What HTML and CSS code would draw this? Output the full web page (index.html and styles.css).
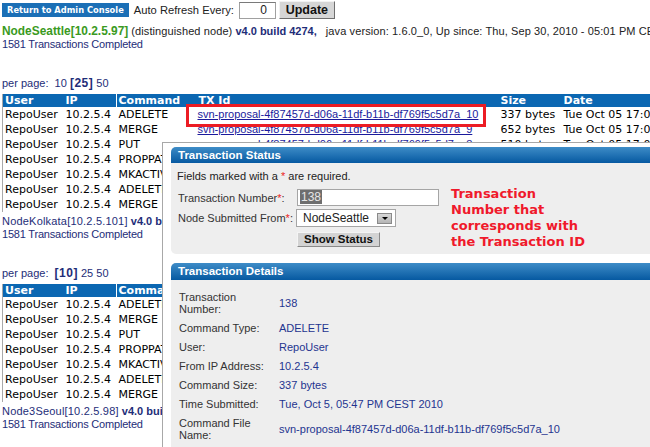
FILE: index.html
```html
<!DOCTYPE html>
<html>
<head>
<meta charset="utf-8">
<title>Transactions</title>
<link rel="stylesheet" href="styles.css">
</head>
<body>
<div class="toolbar">
  <button class="btn-admin">Return to Admin Console</button>
  <span class="refresh-label">Auto Refresh Every:</span>
  <span class="refresh-input">0</span>
  <button class="btn-update">Update</button>
</div>

<section class="node first">
  <div class="node-line"><span class="node-name dist">NodeSeattle[10.2.5.97]</span> <span class="plain">(distinguished node)</span> <b class="ver">v4.0 build 4274,</b> <span class="plain java">java version: 1.6.0_0, Up since: Thu, Sep 30, 2010 - 05:01 PM CEST</span></div>
  <div class="count">1581 Transactions Completed</div>
  <div class="pager">per page:&nbsp; <a>10</a> <b>[25]</b> <a>50</a></div>
  <table class="tx">
    <colgroup><col class="c1"><col class="c2"><col class="c3"><col class="c4"><col class="c5"><col class="c6"></colgroup>
    <thead><tr><th>User</th><th>IP</th><th>Command</th><th>TX Id</th><th>Size</th><th>Date</th></tr></thead>
    <tbody>
      <tr><td>RepoUser</td><td>10.2.5.4</td><td>ADELETE</td><td><a class="txlink">svn-proposal-4f87457d-d06a-11df-b11b-df769f5c5d7a_10</a></td><td>337 bytes</td><td>Tue Oct 05 17:07:23 CEST 2010</td></tr>
      <tr><td>RepoUser</td><td>10.2.5.4</td><td>MERGE</td><td><a class="txlink">svn-proposal-4f87457d-d06a-11df-b11b-df769f5c5d7a_9</a></td><td>652 bytes</td><td>Tue Oct 05 17:07:22 CEST 2010</td></tr>
      <tr><td>RepoUser</td><td>10.2.5.4</td><td>PUT</td><td><a class="txlink">svn-proposal-4f87457d-d06a-11df-b11b-df769f5c5d7a_8</a></td><td>510 bytes</td><td>Tue Oct 05 17:07:21 CEST 2010</td></tr>
      <tr><td>RepoUser</td><td>10.2.5.4</td><td>PROPPATCH</td><td><a class="txlink">svn-proposal-4f87457d-d06a-11df-b11b-df769f5c5d7a_7</a></td><td>420 bytes</td><td>Tue Oct 05 17:07:21 CEST 2010</td></tr>
      <tr><td>RepoUser</td><td>10.2.5.4</td><td>MKACTIVITY</td><td><a class="txlink">svn-proposal-4f87457d-d06a-11df-b11b-df769f5c5d7a_6</a></td><td>298 bytes</td><td>Tue Oct 05 17:07:20 CEST 2010</td></tr>
      <tr><td>RepoUser</td><td>10.2.5.4</td><td>ADELETE</td><td><a class="txlink">svn-proposal-4f87457d-d06a-11df-b11b-df769f5c5d7a_5</a></td><td>337 bytes</td><td>Tue Oct 05 17:06:58 CEST 2010</td></tr>
      <tr><td>RepoUser</td><td>10.2.5.4</td><td>MERGE</td><td><a class="txlink">svn-proposal-4f87457d-d06a-11df-b11b-df769f5c5d7a_4</a></td><td>652 bytes</td><td>Tue Oct 05 17:06:57 CEST 2010</td></tr>
    </tbody>
  </table>
</section>

<section class="node">
  <div class="node-line"><span class="node-name">NodeKolkata[10.2.5.101]</span> <b class="ver">v4.0 build 4274,</b> <span class="plain java">java version: 1.6.0_0, Up since: Thu, Sep 30, 2010 - 05:03 PM CEST</span></div>
  <div class="count">1581 Transactions Completed</div>
  <div class="pager">per page:&nbsp; <b>[10]</b> <a>25</a> <a>50</a></div>
  <table class="tx">
    <colgroup><col class="c1"><col class="c2"><col class="c3"><col class="c4"><col class="c5"><col class="c6"></colgroup>
    <thead><tr><th>User</th><th>IP</th><th>Command</th><th>TX Id</th><th>Size</th><th>Date</th></tr></thead>
    <tbody>
      <tr><td>RepoUser</td><td>10.2.5.4</td><td>ADELETE</td><td><a class="txlink">svn-proposal-4f87457d-d06a-11df-b11b-df769f5c5d7a_10</a></td><td>337 bytes</td><td>Tue Oct 05 17:07:23 CEST 2010</td></tr>
      <tr><td>RepoUser</td><td>10.2.5.4</td><td>MERGE</td><td><a class="txlink">svn-proposal-4f87457d-d06a-11df-b11b-df769f5c5d7a_9</a></td><td>652 bytes</td><td>Tue Oct 05 17:07:22 CEST 2010</td></tr>
      <tr><td>RepoUser</td><td>10.2.5.4</td><td>PUT</td><td><a class="txlink">svn-proposal-4f87457d-d06a-11df-b11b-df769f5c5d7a_8</a></td><td>510 bytes</td><td>Tue Oct 05 17:07:21 CEST 2010</td></tr>
      <tr><td>RepoUser</td><td>10.2.5.4</td><td>PROPPATCH</td><td><a class="txlink">svn-proposal-4f87457d-d06a-11df-b11b-df769f5c5d7a_7</a></td><td>420 bytes</td><td>Tue Oct 05 17:07:21 CEST 2010</td></tr>
      <tr><td>RepoUser</td><td>10.2.5.4</td><td>MKACTIVITY</td><td><a class="txlink">svn-proposal-4f87457d-d06a-11df-b11b-df769f5c5d7a_6</a></td><td>298 bytes</td><td>Tue Oct 05 17:07:20 CEST 2010</td></tr>
      <tr><td>RepoUser</td><td>10.2.5.4</td><td>ADELETE</td><td><a class="txlink">svn-proposal-4f87457d-d06a-11df-b11b-df769f5c5d7a_5</a></td><td>337 bytes</td><td>Tue Oct 05 17:06:58 CEST 2010</td></tr>
      <tr><td>RepoUser</td><td>10.2.5.4</td><td>MERGE</td><td><a class="txlink">svn-proposal-4f87457d-d06a-11df-b11b-df769f5c5d7a_4</a></td><td>652 bytes</td><td>Tue Oct 05 17:06:57 CEST 2010</td></tr>
    </tbody>
  </table>
</section>

<section class="node">
  <div class="node-line"><span class="node-name">Node3Seoul[10.2.5.98]</span> <b class="ver">v4.0 build 4274,</b> <span class="plain java">java version: 1.6.0_0, Up since: Thu, Sep 30, 2010 - 05:04 PM CEST</span></div>
  <div class="count">1581 Transactions Completed</div>
</section>

<div class="callout"></div>

<div class="overlay">
  <div class="panel">
    <div class="panel-head">Transaction Status</div>
    <div class="status-body">
      <div class="form">
        <div class="note">Fields marked with a <span class="req">*</span> are required.</div>
        <div class="frow r1">
          <span class="flabel">Transaction Number<span class="req">*</span>:</span>
          <span class="field"><span class="selected">138</span></span>
        </div>
        <div class="frow r2">
          <span class="flabel">Node Submitted From<span class="req">*</span>:</span>
          <span class="select"><span>NodeSeattle</span><span class="arrow"><span class="tri"></span></span></span>
        </div>
        <div class="frow r3">
          <span></span>
          <button class="btn-show">Show Status</button>
        </div>
      </div>
      <div class="annotation">Transaction<br>Number that<br>corresponds with<br>the Transaction ID</div>
    </div>
  </div>

  <div class="panel details">
    <div class="panel-head">Transaction Details</div>
    <dl class="details-body">
      <dt>Transaction Number:</dt><dd>138</dd>
      <dt>Command Type:</dt><dd>ADELETE</dd>
      <dt>User:</dt><dd>RepoUser</dd>
      <dt>From IP Address:</dt><dd>10.2.5.4</dd>
      <dt>Command Size:</dt><dd>337 bytes</dd>
      <dt>Time Submitted:</dt><dd>Tue, Oct 5, 05:47 PM CEST 2010</dd>
      <dt>Command File Name:</dt><dd>svn-proposal-4f87457d-d06a-11df-b11b-df769f5c5d7a_10</dd>
    </dl>
  </div>
</div>
</body>
</html>
```
FILE: styles.css
```css
* { box-sizing: border-box; }
html { overflow: hidden; }
body {
  margin: 0;
  padding: 0 2px;
  font-family: "Liberation Sans", Arial, sans-serif;
  font-size: 11px;
  color: #222;
  background: #fff;
}

/* toolbar */
.toolbar {
  display: flex;
  align-items: center;
  height: 20px;
  white-space: nowrap;
}
.btn-admin {
  margin: 0;
  padding: 0 5px;
  height: 14px;
  border: 0;
  background: #1b6fb6;
  color: #fff;
  font-family: "DejaVu Sans", Verdana, sans-serif;
  font-weight: bold;
  font-size: 8.3px;
  line-height: 14px;
}
.refresh-label {
  margin-left: 5px;
  font-size: 11.2px;
  color: #222;
}
.refresh-input {
  margin-left: 5px;
  width: 37px;
  height: 17px;
  border: 1px solid #a0a0a0;
  border-top-color: #7a7a7a;
  background: #fff;
  text-align: right;
  padding-right: 8px;
  font-size: 12px;
  line-height: 15px;
  color: #222;
}
.btn-update {
  margin: 0 0 0 3px;
  width: 56px;
  height: 18px;
  padding: 0;
  background: #d6d6d6;
  border: 1px solid;
  border-color: #f2f2f2 #6e6e6e #6e6e6e #f2f2f2;
  font-family: "Liberation Sans", Arial, sans-serif;
  font-weight: bold;
  font-size: 12.5px;
  color: #111;
}

/* node sections */
.node { margin-top: 3px; }
.node.first { margin-top: 5px; }
.node-line {
  line-height: 13px;
  white-space: nowrap;
}
.node-name { color: #1e2d78; letter-spacing: 0.2px; }
.node-name.dist {
  color: #3a9a22;
  font-weight: bold;
  font-size: 11.9px;
  letter-spacing: 0;
}
.plain { color: #222; letter-spacing: 0.1px; }
.java { margin-left: 6px; }
.ver { color: #1e2d78; font-weight: bold; }
.count {
  color: #1e2d78;
  line-height: 13px;
  letter-spacing: -0.2px;
}
.pager {
  margin-top: 26px;
  line-height: 13px;
  color: #1e2d78;
}
.pager b { font-size: 12px; letter-spacing: 0.5px; }

/* transaction table */
.tx {
  margin-top: 4px;
  border-collapse: collapse;
  table-layout: fixed;
  width: 711px;
  border-left: 1px solid #a9a9a9;
  font-family: "DejaVu Sans", Verdana, sans-serif;
  font-size: 11px;
}
.c1 { width: 61px; }
.c2 { width: 53px; }
.c3 { width: 80px; }
.c4 { width: 302px; }
.c5 { width: 63px; }
.c6 { width: 152px; }
.tx th {
  background: #0b67b2;
  color: #fff;
  text-align: left;
  font-weight: bold;
  height: 13px;
  line-height: 13px;
  padding: 0 0 0 2px;
  white-space: nowrap;
  overflow: hidden;
}
.tx td {
  height: 15px;
  line-height: 15px;
  padding: 0 0 0 2px;
  white-space: nowrap;
  overflow: hidden;
  color: #000;
}
.txlink {
  font-family: "Liberation Sans", Arial, sans-serif;
  font-size: 11px;
  color: #1a1a9c;
  text-decoration: underline;
  margin-left: -1px;
}

/* red annotation box around the first TX id */
.callout {
  position: absolute;
  left: 186px;
  top: 104px;
  width: 300px;
  height: 23px;
  border: 3px solid #ec1c24;
}

/* overlay window */
.overlay {
  position: absolute;
  left: 162px;
  top: 142px;
  width: 540px;
  height: 360px;
  background: #fff;
  border-left: 1px solid #a8a8a8;
  border-top: 1px solid #a8a8a8;
  padding: 4px 0 0 8px;
  display: flex;
  flex-direction: column;
  gap: 9px;
}
.panel {
  width: 520px;
  border-radius: 5px;
  background: #eeeeee;
  overflow: hidden;
  flex: none;
}
.details { flex: 1; }
.panel-head {
  height: 16px;
  line-height: 16px;
  padding-left: 7px;
  background: linear-gradient(#3e8cc7, #0659a1);
  color: #fff;
  font-weight: bold;
  font-size: 11.5px;
}
.details .panel-head { height: 17px; line-height: 17px; }

.status-body {
  display: flex;
  align-items: flex-start;
  padding: 7px 0 7px 7px;
}
.form { display: flex; flex-direction: column; }
.note { line-height: 13px; margin-left: -1px; color: #222; }
.req { color: #ec1c24; }
.frow {
  display: grid;
  grid-template-columns: 119px auto;
  align-items: center;
}
.r1 { margin-top: 6px; }
.r2 { margin-top: 3px; }
.r3 { margin-top: 5px; }
.flabel { color: #333; white-space: nowrap; }
.field {
  width: 142px;
  height: 17px;
  border: 1px solid #a5a5a5;
  background: #fff;
  padding: 0 2px;
  font-size: 12px;
  line-height: 15px;
}
.selected { background: #6e6e6e; color: #e6e6e6; padding: 0 1px; }
.select {
  width: 100px;
  height: 18px;
  margin-left: -1px;
  border: 1px solid #a5a5a5;
  background: #fff;
  display: flex;
  align-items: center;
  justify-content: space-between;
  padding: 0 3px 0 6px;
  font-size: 12px;
  color: #222;
}
.arrow {
  width: 15px;
  height: 11px;
  border: 1px solid #8a8a8a;
  background: linear-gradient(#d8d8d8, #b4b4b4);
  display: flex;
  align-items: center;
  justify-content: center;
}
.tri {
  width: 0;
  height: 0;
  border-left: 3px solid transparent;
  border-right: 3px solid transparent;
  border-top: 3px solid #000;
}
.btn-show {
  margin: 0;
  width: 83px;
  height: 15px;
  padding: 0;
  background: #d3d3d3;
  border: 1px solid;
  border-color: #f4f4f4 #8a8a8a #8a8a8a #f4f4f4;
  font-family: "Liberation Sans", Arial, sans-serif;
  font-weight: bold;
  font-size: 11.5px;
  line-height: 13px;
  color: #111;
}
.annotation {
  margin: 16px 0 -4px 12px;
  font-family: "DejaVu Sans", Verdana, sans-serif;
  font-weight: bold;
  font-size: 13px;
  line-height: 16px;
  color: #f0192b;
  white-space: nowrap;
}

.details-body {
  margin: 0;
  padding: 7px 0 0 8px;
  display: grid;
  grid-template-columns: 92px auto;
  column-gap: 8px;
  align-items: center;
}
.details-body dt,
.details-body dd {
  margin: 0;
  padding: 3.5px 0;
  line-height: 12px;
}
.details-body dt { color: #333; }
.details-body dd { color: #1f3590; white-space: nowrap; }
```
